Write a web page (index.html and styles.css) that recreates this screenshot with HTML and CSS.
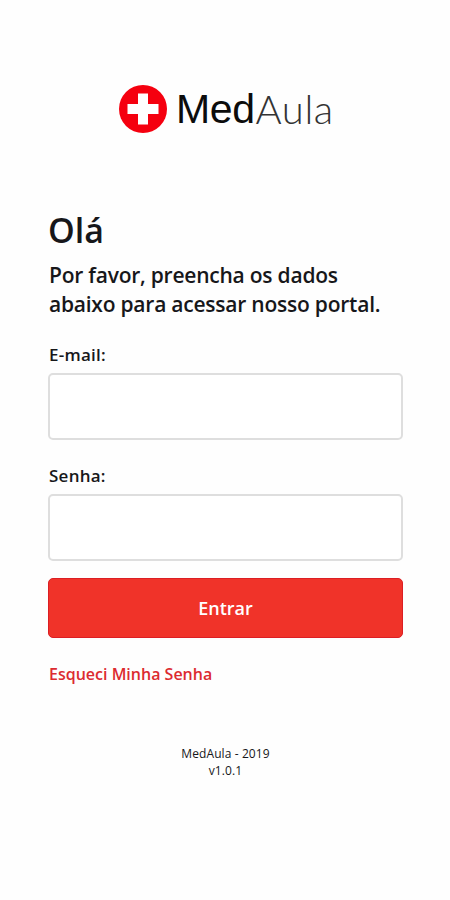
FILE: index.html
```html
<!DOCTYPE html>
<html lang="pt-BR">
<head>
<meta charset="utf-8">
<meta name="viewport" content="width=device-width, initial-scale=1">
<title>MedAula</title>
<link rel="stylesheet" href="styles.css">
</head>
<body>
<main class="login">
  <header class="brand">
    <svg class="brand-icon" viewBox="0 0 48 48" aria-hidden="true">
      <circle cx="24" cy="24" r="24" fill="#f5000f"/>
      <path d="M19 8.500h10V19h10.500v10H29v10.500H19V29H8.500V19H19z" fill="#fff"/>
    </svg>
    <div class="brand-name"><span class="brand-med">Med</span><span class="brand-aula">Aula</span></div>
  </header>
  <h1 class="title">Olá</h1>
  <p class="intro">Por favor, preencha os dados<br>abaixo para acessar nosso portal.</p>
  <form class="form">
    <label class="label" for="email">E-mail:</label>
    <input class="field" id="email" type="email">
    <label class="label" for="password">Senha:</label>
    <input class="field" id="password" type="password">
    <button class="submit" type="button">Entrar</button>
  </form>
  <a class="forgot" href="#">Esqueci Minha Senha</a>
  <footer class="footer">MedAula - 2019<br>v1.0.1</footer>
</main>
</body>
</html>
```
FILE: styles.css
```css
* { box-sizing: border-box; }

body {
  margin: 0;
  background: #fefefe;
  color: #17171a;
  font-family: "Open Sans", "Noto Sans", sans-serif;
}

.login {
  display: flex;
  flex-direction: column;
  align-items: flex-start;
  width: 450px;
  height: 900px;
  padding: 85px 47px 0 48px;
  white-space: nowrap;
}

.brand {
  display: flex;
  align-items: center;
  height: 48px;
  margin-left: 71px;
}

.brand-icon { width: 48px; height: 48px; }

.brand-name {
  display: flex;
  margin-left: 9px;
  line-height: 48px;
}

.brand-med {
  font-family: "Liberation Sans", sans-serif;
  font-size: 41px;
  letter-spacing: -0.4px;
  color: #0c0c0c;
}

.brand-aula {
  margin-left: 1px;
  font-family: Lato, sans-serif;
  font-weight: 300;
  font-size: 40px;
  letter-spacing: 0.6px;
  color: #333;
}

.title {
  margin: 78px 0 0;
  font-size: 34px;
  font-weight: 600;
  line-height: 38px;
}

.intro {
  margin: 12px 0 0 1px;
  font-size: 21px;
  font-weight: 600;
  letter-spacing: -0.23px;
  line-height: 29px;
}

.form {
  display: flex;
  flex-direction: column;
  width: 355px;
  margin-top: 24px;
}

.label {
  height: 30px;
  padding-left: 1px;
  font-size: 17px;
  font-weight: 600;
  letter-spacing: 0.25px;
  line-height: 24px;
}

.field {
  width: 355px;
  height: 67px;
  margin: 0 0 24px;
  padding: 0 16px;
  border: 2px solid #dedede;
  border-radius: 5px;
  background: #fff;
  font: inherit;
}

#password { margin-bottom: 17px; }

.submit {
  height: 60px;
  padding: 0;
  border: 1px solid #dc1e24;
  border-radius: 5px;
  background: #f03329;
  color: #fff;
  font: 600 18px/24px "Open Sans", sans-serif;
}

.forgot {
  margin: 24px 0 0 1px;
  color: #dc2b30;
  font-size: 16px;
  font-weight: 600;
  line-height: 24px;
  text-decoration: none;
}

.footer {
  align-self: center;
  margin-top: 59px;
  font-size: 12px;
  letter-spacing: 0.1px;
  line-height: 17px;
  text-align: center;
}
```
